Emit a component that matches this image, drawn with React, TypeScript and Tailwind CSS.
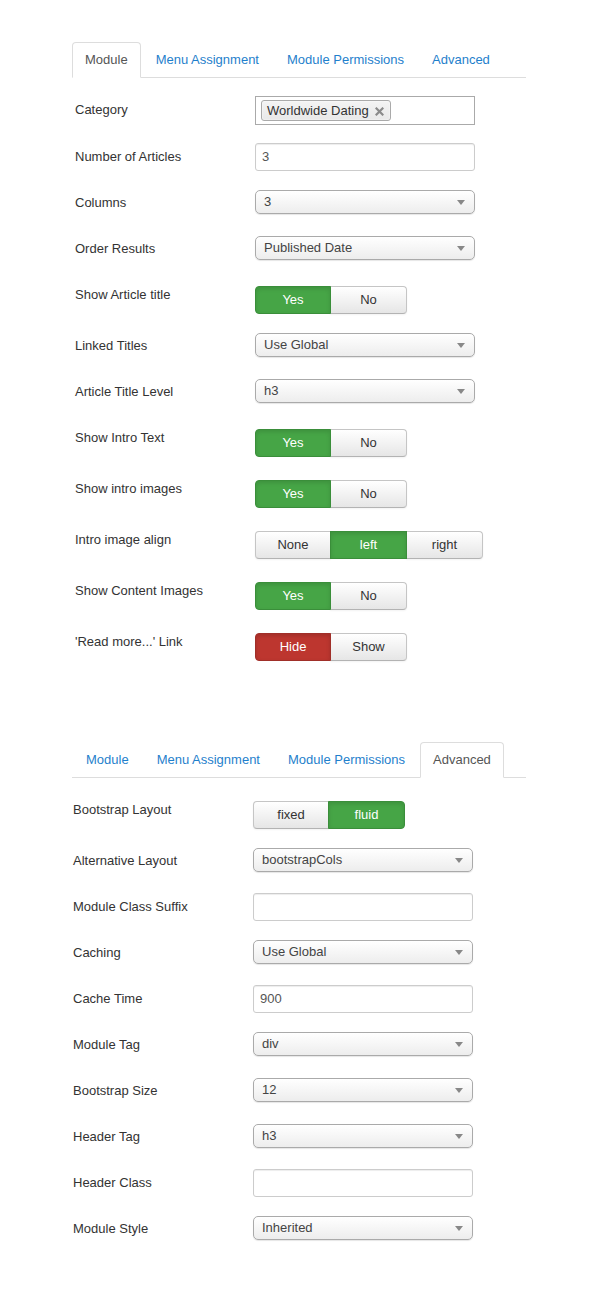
import React from 'react';

type Row =
    | { kind: 'select'; label: string; value: string }
    | { kind: 'input'; label: string; value?: string }
    | { kind: 'toggle'; label: string; options: string[]; active: number; tone?: 'success' | 'danger' }
    | { kind: 'tags'; label: string; tags: string[] };

const tabs = ['Module', 'Menu Assignment', 'Module Permissions', 'Advanced'];

const moduleRows: Row[] = [
    { kind: 'tags', label: 'Category', tags: ['Worldwide Dating'] },
    { kind: 'input', label: 'Number of Articles', value: '3' },
    { kind: 'select', label: 'Columns', value: '3' },
    { kind: 'select', label: 'Order Results', value: 'Published Date' },
    { kind: 'toggle', label: 'Show Article title', options: ['Yes', 'No'], active: 0 },
    { kind: 'select', label: 'Linked Titles', value: 'Use Global' },
    { kind: 'select', label: 'Article Title Level', value: 'h3' },
    { kind: 'toggle', label: 'Show Intro Text', options: ['Yes', 'No'], active: 0 },
    { kind: 'toggle', label: 'Show intro images', options: ['Yes', 'No'], active: 0 },
    { kind: 'toggle', label: 'Intro image align', options: ['None', 'left', 'right'], active: 1 },
    { kind: 'toggle', label: 'Show Content Images', options: ['Yes', 'No'], active: 0 },
    { kind: 'toggle', label: "'Read more...' Link", options: ['Hide', 'Show'], active: 0, tone: 'danger' },
];

const advancedRows: Row[] = [
    { kind: 'toggle', label: 'Bootstrap Layout', options: ['fixed', 'fluid'], active: 1 },
    { kind: 'select', label: 'Alternative Layout', value: 'bootstrapCols' },
    { kind: 'input', label: 'Module Class Suffix' },
    { kind: 'select', label: 'Caching', value: 'Use Global' },
    { kind: 'input', label: 'Cache Time', value: '900' },
    { kind: 'select', label: 'Module Tag', value: 'div' },
    { kind: 'select', label: 'Bootstrap Size', value: '12' },
    { kind: 'select', label: 'Header Tag', value: 'h3' },
    { kind: 'input', label: 'Header Class' },
    { kind: 'select', label: 'Module Style', value: 'Inherited' },
];

function Tabs({ active, offset }: { active: number; offset: string }) {
    return (
        <div className={`flex border-b border-[#dddddd] h-[36px] ${offset}`}>
            {tabs.map((tab, idx) => (
                <div
                    key={tab}
                    className={
                        idx === active
                            ? 'mr-[2px] px-[12px] pt-[8px] h-[36px] leading-[18px] border border-[#dddddd] border-b-white rounded-t-[4px] bg-white text-[#555555] -mb-px'
                            : 'mr-[2px] px-[12px] pt-[8px] h-[36px] leading-[18px] border border-transparent text-[#1f7fcc]'
                    }
                >
                    {tab}
                </div>
            ))}
        </div>
    );
}

function ChosenSelect({ value }: { value: string }) {
    return (
        <div className="relative w-[220px] h-[24px] mt-px border border-[#aaaaaa] rounded-[5px] bg-linear-to-b from-white via-[#f6f6f6] to-[#ededed] shadow-[0_1px_1px_rgba(0,0,0,0.1)] pl-[8px] leading-[22px] text-[#444444]">
            {value}
            <span className="absolute right-[9px] top-[9px] w-0 h-0 border-l-[4px] border-r-[4px] border-t-[5px] border-l-transparent border-r-transparent border-t-[#888888]" />
        </div>
    );
}

function TextInput({ value }: { value?: string }) {
    return (
        <div className="w-[220px] h-[28px] border border-[#cccccc] rounded-[3px] bg-white px-[6px] leading-[26px] text-[#555555] shadow-[inset_0_1px_1px_rgba(0,0,0,0.075)]">
            {value}
        </div>
    );
}

function TagSelect({ tags }: { tags: string[] }) {
    return (
        <div className="w-[220px] h-[29px] border border-[#aaaaaa] bg-white px-[5px] pt-[3px] flex gap-1">
            {tags.map((tag) => (
                <span
                    key={tag}
                    className="h-[21px] flex items-center gap-[6px] pl-[5px] pr-[6px] border border-[#aaaaaa] rounded-[3px] bg-linear-to-b from-[#f4f4f4] to-[#e8e8e8] text-[#333333] leading-[18px] shadow-[inset_0_0_2px_white]"
                >
                    {tag}
                    <svg width="9" height="9" viewBox="0 0 9 9" className="mt-px">
                        <path d="M1.5 1.5 L7.5 7.5 M7.5 1.5 L1.5 7.5" stroke="#8a8a8a" strokeWidth="2.2" strokeLinecap="square" />
                    </svg>
                </span>
            ))}
        </div>
    );
}

function Toggle({ options, active, tone = 'success' }: { options: string[]; active: number; tone?: 'success' | 'danger' }) {
    return (
        <div className="flex mt-[5px]">
            {options.map((opt, idx) => {
                const first = idx === 0;
                const last = idx === options.length - 1;
                const on = idx === active;
                const shape = [
                    first ? 'w-[76px] rounded-l-[4px]' : 'w-[77px] -ml-px',
                    last ? 'rounded-r-[4px]' : '',
                ].join(' ');
                const look = on
                    ? tone === 'danger'
                        ? 'relative z-10 bg-[#bd362f] border-[#a02f29] text-white shadow-[inset_0_2px_4px_rgba(0,0,0,0.15)]'
                        : 'relative z-10 bg-[#46a546] border-[#3a8e3a] text-white shadow-[inset_0_2px_4px_rgba(0,0,0,0.12)]'
                    : 'bg-linear-to-b from-white to-[#e6e6e6] border-[#c5c5c5] border-b-[#b3b3b3] text-[#333333] shadow-[inset_0_1px_0_rgba(255,255,255,0.2),0_1px_2px_rgba(0,0,0,0.05)]';
                return (
                    <div
                        key={opt}
                        className={`h-[28px] border text-center leading-[26px] ${shape} ${look}`}
                    >
                        {opt}
                    </div>
                );
            })}
        </div>
    );
}

function FormRow({ row, labelClass }: { row: Row; labelClass: string }) {
    return (
        <div className={row.kind === 'toggle' ? 'flex h-[51px]' : row.kind === 'tags' ? 'flex h-[47px]' : 'flex h-[46px]'}>
            <div className={`shrink-0 pt-[5px] leading-[18px] text-[#333333] ${labelClass}`}>{row.label}</div>
            <div>
                {row.kind === 'select' && <ChosenSelect value={row.value} />}
                {row.kind === 'input' && <TextInput value={row.value} />}
                {row.kind === 'tags' && <TagSelect tags={row.tags} />}
                {row.kind === 'toggle' && <Toggle options={row.options} active={row.active} tone={row.tone} />}
            </div>
        </div>
    );
}

export default function App() {
    return (
        <div
            className="w-[590px] min-h-[1290px] bg-white pt-[42px] pl-[72px] text-[13px]"
            style={{ fontFamily: '"Liberation Sans", Arial, sans-serif' }}
        >
            {/* Module tab */}
            <div className="w-[454px]">
                <Tabs active={0} offset="" />
                <div className="pt-[18px]">
                    {moduleRows.map((row) => (
                        <FormRow key={row.label} row={row} labelClass="w-[183px] pl-[3px]" />
                    ))}
                </div>
            </div>

            {/* Advanced tab */}
            <div className="w-[454px] mt-[63px]">
                <Tabs active={3} offset="pl-[1px]" />
                <div className="pt-[18px]">
                    {advancedRows.map((row) => (
                        <FormRow key={row.label} row={row} labelClass="w-[181px] pl-[1px]" />
                    ))}
                </div>
            </div>
        </div>
    );
}
